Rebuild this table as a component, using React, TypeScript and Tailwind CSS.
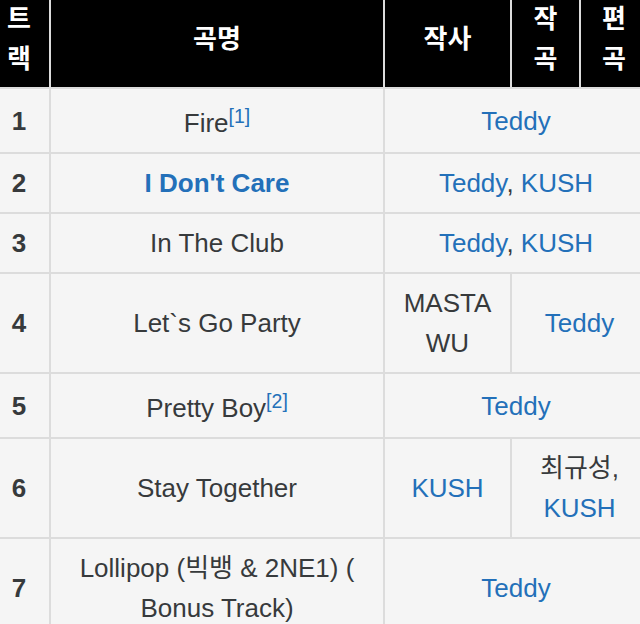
import React from 'react';

interface Track {
  no: number;
  title: React.ReactNode;
  cells: { content: React.ReactNode; span: number }[];
}

const Link = ({ children }: { children: React.ReactNode }) => (
  <span className="text-[#2370b9]">{children}</span>
);

// footnote mark, raised a bit like the wiki's [n]
const Ref = ({ n }: { n: number }) => (
  <span className="align-[9px] text-[0.75em] leading-[36px] text-[#2370b9]">[{n}]</span>
);

const tracks: Track[] = [
  {
    no: 1,
    title: <>Fire<Ref n={1} /></>,
    cells: [{ content: <Link>Teddy</Link>, span: 3 }],
  },
  {
    no: 2,
    title: <span className="font-bold text-[#2370b9]">I Don't Care</span>,
    cells: [{ content: <><Link>Teddy</Link>, <Link>KUSH</Link></>, span: 3 }],
  },
  {
    no: 3,
    title: 'In The Club',
    cells: [{ content: <><Link>Teddy</Link>, <Link>KUSH</Link></>, span: 3 }],
  },
  {
    no: 4,
    title: 'Let`s Go Party',
    cells: [
      { content: 'MASTA WU', span: 1 },
      { content: <Link>Teddy</Link>, span: 2 },
    ],
  },
  {
    no: 5,
    title: <>Pretty Boy<Ref n={2} /></>,
    cells: [{ content: <Link>Teddy</Link>, span: 3 }],
  },
  {
    no: 6,
    title: 'Stay Together',
    cells: [
      { content: <Link>KUSH</Link>, span: 1 },
      { content: <>최규성, <Link>KUSH</Link></>, span: 2 },
    ],
  },
  {
    no: 7,
    title: 'Lollipop (빅뱅 & 2NE1) ( Bonus Track)',
    cells: [{ content: <Link>Teddy</Link>, span: 3 }],
  },
];

const cell = 'border-2 border-[#dcdcdc] px-[10px] text-center align-middle';
const td = `${cell} py-[9px]`;
const th = `${cell} pt-[9px] pb-[8px] font-bold`;

export default function App() {
  return (
    <div
      className="w-[640px] h-[624px] overflow-hidden bg-white"
      style={{ fontFamily: '"Liberation Sans", "Noto Sans CJK KR", sans-serif' }}
    >
      <table className="table-fixed border-collapse w-[660px] -ml-[13px] -mt-[12px] text-[26px] leading-[40px] text-[#373a3c]">
        <colgroup>
          <col className="w-[62px]" />
          <col className="w-[334px]" />
          <col className="w-[127px]" />
          <col className="w-[69px]" />
          <col className="w-[68px]" />
        </colgroup>
        <thead>
          <tr className="bg-black text-white">
            <th className={th}>트랙</th>
            <th className={th}>곡명</th>
            <th className={th}>작사</th>
            <th className={th}>작곡</th>
            <th className={th}>편곡</th>
          </tr>
        </thead>
        <tbody>
          {tracks.map((t) => (
            <tr key={t.no} className="bg-[#f5f5f5]">
              <td className={`${td} font-bold`}>{t.no}</td>
              <td className={td}>{t.title}</td>
              {t.cells.map((c, i) => (
                <td key={i} colSpan={c.span} className={td}>
                  {c.content}
                </td>
              ))}
            </tr>
          ))}
        </tbody>
      </table>
    </div>
  );
}
